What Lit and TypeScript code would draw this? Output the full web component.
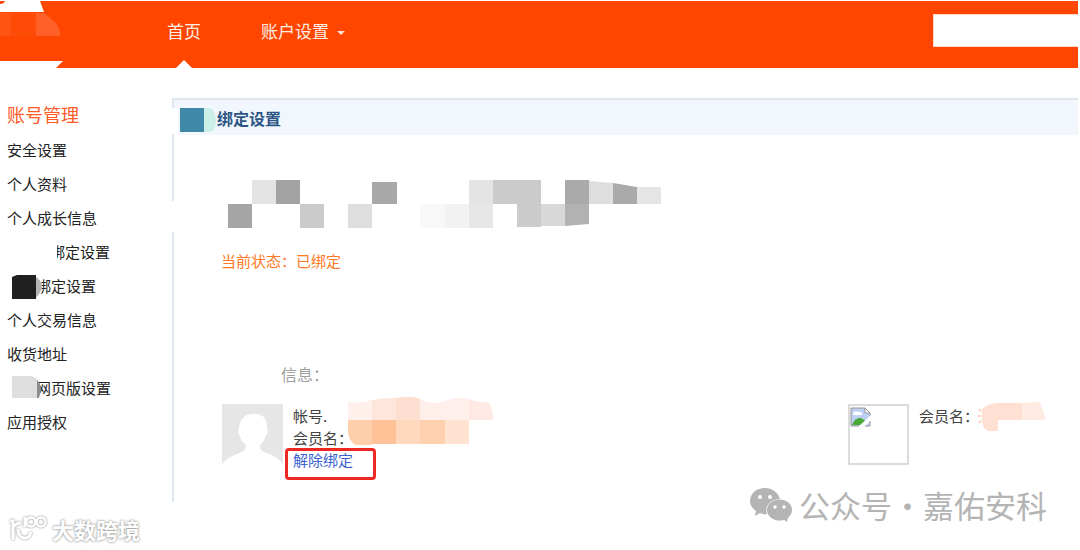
import { LitElement, html, svg, css } from "lit";
import { customElement, property } from "lit/decorators.js";

type Tile = [x: number, y: number, w: number, h: number, fill: string];

const tiles = (list: Tile[]) =>
  list.map(([x, y, w, h, fill]) => svg`<rect x=${x} y=${y} width=${w} height=${h} fill=${fill} />`);

@customElement("site-header")
class SiteHeader extends LitElement {
  static styles = css`
    :host { display: block; padding: 1px 2px 0 0; }
    .bar { display: flex; align-items: center; height: 67px; background: #ff4600; color: #fff; }
    .logo { flex: none; width: 64px; height: 67px; }
    .nav { display: flex; align-self: stretch; flex: 1; margin-left: 103px; gap: 60px; }
    .item {
      position: relative; display: flex; align-items: center; height: 58px; gap: 8px;
      padding: 0; border: 0; background: none; color: #ffeee4; font: inherit; font-size: 17px;
      text-decoration: none; white-space: nowrap; cursor: pointer;
    }
    .pointer { position: absolute; left: 9px; top: 59px; width: 16px; height: 8px; }
    .caret { width: 8px; height: 4px; margin-top: 6px; }
    .search { width: 145px; height: 33px; box-sizing: border-box; border: 1px solid #ffd9ca; border-right: 0;
      background: #fff; padding: 0 8px; margin-bottom: 8px; font: inherit; outline: none; border-radius: 0; }
  `;
  render() {
    return html`<header class="bar">
      <svg class="logo" viewBox="0 1 64 67" aria-hidden="true">
        <path d="M0 4Q4 4 5 1H40L44 12H0Z" fill="#fff" />
        <path d="M0 13H11V36H0Z" fill="#ff5413" />
        <path d="M11 13H36V36H11Z" fill="#ff4b08" />
        <path d="M36 13H45C48 18 58 21 60 32V36H36Z" fill="#ff6028" />
        <path d="M0 61H63L56 68H0Z" fill="#fff" />
      </svg>
      <nav class="nav">
        <a class="item" href="#home">首页
          <svg class="pointer" viewBox="0 0 16 8" aria-hidden="true"><path d="M0 8L8 0L16 8Z" fill="#fff" /></svg>
        </a>
        <button class="item" type="button">账户设置
          <svg class="caret" viewBox="0 0 8 4" aria-hidden="true"><path d="M0 0H8L4 4Z" fill="#ffe0d0" /></svg>
        </button>
      </nav>
      <input class="search" type="search" aria-label="搜索" />
    </header>`;
  }
}

@customElement("side-menu")
class SideMenu extends LitElement {
  static styles = css`
    :host { display: block; padding: 2px 0 0 7px; }
    .title { margin: 0; font-size: 18px; line-height: 28px; font-weight: 400; color: #ff5a26; }
    .list { list-style: none; margin: 4px 0 0; padding: 0; }
    .row { position: relative; display: flex; align-items: center; height: 34px; font-size: 15px; }
    .link { color: #222; text-decoration: none; white-space: nowrap; }
    .near { padding-left: 29px; }
    .far { padding-left: 43px; }
    .cover { position: absolute; left: 3px; top: 5px; width: 48px; height: 28px; }
  `;
  private row(label: string, indent = "", cover: unknown = "") {
    return html`<li class="row ${indent}">
      <a class="link" href="#settings">${label}</a>
      ${cover ? html`<svg class="cover" viewBox="0 0 48 28" aria-hidden="true">${cover}</svg>` : ""}
    </li>`;
  }
  render() {
    return html`<h2 class="title">账号管理</h2>
      <ul class="list">
        ${this.row("安全设置")} ${this.row("个人资料")} ${this.row("个人成长信息")}
        ${this.row("绑定设置", "far", svg`<path d="M30 0H47V28H30Z" fill="#fff" />`)}
        ${this.row("绑定设置", "near", svg`<path d="M20 0H31V28H20Z" fill="#fff" />
          <path d="M25 3Q32 7 32 15Q30 21 25 26Z" fill="#b5b5b5" />
          <path d="M2 4L7 2H26V26H2Z" fill="#202020" />`)}
        ${this.row("个人交易信息")} ${this.row("收货地址")}
        ${this.row("网页版设置", "near", svg`<path d="M25 3Q31 7 31 15L29 23H25Z" fill="#8c8c8c" />
          <path d="M2 1H22L27 4V23H2Z" fill="#dedede" />`)}
        ${this.row("应用授权")}
      </ul>`;
  }
}

@customElement("binding-panel")
class BindingPanel extends LitElement {
  @property() state = "已绑定";
  static styles = css`
    :host { display: block; position: relative; border-left: 2px solid #dfe8f0; padding-bottom: 31px; }
    .gap { position: absolute; left: -2px; width: 2px; background: #fff; }
    .gap-head { top: 10px; height: 26px; width: 6px; }
    .gap-body { top: 103px; height: 31px; }
    .head { display: flex; align-items: center; gap: 1px; height: 35px; border-top: 2px solid #dfe6ee;
      background: #f2f7fe; padding-left: 6px; }
    .swatch { width: 36px; height: 24px; margin-top: 5px; }
    .title { margin: 0; font-size: 16px; line-height: 24px; font-weight: 700; color: #2c5584; }
    .mosaic { display: block; width: 434px; height: 48px; margin: 45px 0 0 54px; }
    .status { margin: 22px 0 0 47px; font-size: 15px; line-height: 22px; color: #ff7a26; }
    .caption { margin: 91px 0 0 107px; font-size: 16px; line-height: 22px; color: #a0a0a0; }
    .people { display: flex; justify-content: space-between; margin: 19px 0 0 48px; }
    .person { position: relative; display: flex; gap: 10px; }
    .second { width: 230px; }
    .avatar { flex: none; width: 61px; height: 61px; }
    .info { font-size: 15px; line-height: 22px; color: #444; padding-top: 1px; white-space: nowrap; }
    .line { margin: 0; }
    .unbind { color: #3a62d0; text-decoration: none; }
    .mark { position: absolute; left: 63px; top: 44px; width: 85px; height: 26px; border: 3px solid #ee2722; border-radius: 4px; }
    .cover { position: absolute; left: 126px; top: -9px; width: 146px; height: 54px; }
    .cover-small { position: absolute; left: 128px; top: -3px; width: 72px; height: 32px; }
  `;
  render() {
    return html`
      <header class="head">
        <svg class="swatch" viewBox="0 0 36 24" aria-hidden="true">
          <path d="M24 0H31Q36 5 36 12Q36 24 28 24H24Z" fill="#cdf0e6" /><rect width="24" height="24" fill="#4088a8" />
        </svg>
        <h1 class="title">绑定设置</h1>
      </header>
      <span class="gap gap-head"></span><span class="gap gap-body"></span>
      <svg class="mosaic" viewBox="228 180 434 48" aria-hidden="true">
        ${tiles([
          [252, 180, 24, 24, "#e3e3e3"], [276, 180, 24, 24, "#a3a3a3"],
          [228, 204, 24, 24, "#a5a5a5"], [300, 204, 24, 24, "#cbcbcb"],
          [348, 204, 24, 24, "#dedede"], [372, 182, 25, 22, "#a8a8a8"],
          [420, 204, 25, 24, "#f8f8f8"], [445, 204, 24, 24, "#f2f2f2"],
          [469, 180, 24, 24, "#e4e4e4"], [469, 204, 24, 24, "#e7e7e7"],
          [493, 180, 48, 24, "#cbcbcb"], [517, 204, 24, 23, "#cbcbcb"],
          [541, 204, 24, 22, "#d8d8d8"], [565, 180, 24, 24, "#aaaaaa"],
        ])}
        <path d="M565 204H589V224L565 226Z" fill="#b2b2b2" />
        <path d="M589 181L613 183V204H589Z" fill="#dedede" />
        <path d="M613 183L637 187V204H613Z" fill="#aaa" />
        <path d="M637 187H661V204H637Z" fill="#e5e5e5" />
      </svg>
      <p class="status">当前状态：${this.state}</p>
      <p class="caption">信息：</p>
      <div class="people">
        <section class="person">
          <svg class="avatar" viewBox="0 0 61 61" role="img" aria-label="头像">
            <rect width="61" height="61" fill="#e6e6e6" />
            <path d="M0 61C3 54 13 51 20 48Q24 46 24 41C20 38 18 34 17 30Q15 28 17 24C18 14 24 10 31 10Q37 9 42 13L43 15C45 17 45 21 45 24Q47 28 44 31C43 35 41 38 38 41Q37 46 42 48C50 51 58 54 61 61Z" fill="#fff" />
          </svg>
          <div class="info">
            <p class="line">帐号.</p>
            <p class="line">会员名：</p>
            <a class="unbind" href="#unbind">解除绑定</a>
          </div>
          <span class="mark"></span>
          <svg class="cover" viewBox="348 395 146 54" aria-hidden="true">
            <path d="M348 402Q360 404 372 400V420H348Z" fill="#fff0eb" />
            <path d="M372 400Q384 398 396 398V420H372Z" fill="#ffe6dc" />
            <path d="M396 398Q412 395 420 399V420H396Z" fill="#fddfd2" />
            <path d="M420 399Q432 406 445 401V420H420Z" fill="#ffefeb" />
            <path d="M445 401Q457 395 469 399V420H445Z" fill="#ffefec" />
            <path d="M469 399Q478 403 488 402Q493 405 493 420H469Z" fill="#ffe9e4" />
            <path d="M348 420H372V445H355Q348 440 348 430Z" fill="#ffcfac" />
            ${tiles([
              [372, 420, 24, 24, "#ffc198"], [396, 420, 24, 24, "#ffd8bd"],
              [420, 420, 25, 24, "#ffd0ae"], [445, 420, 24, 24, "#ffe3d0"],
            ])}
          </svg>
        </section>
        <section class="person second">
          <svg class="avatar" viewBox="0 0 61 61" role="img" aria-label="头像">
            <rect x="1" y="1" width="59" height="59" fill="#fff" stroke="#cfcfcf" stroke-width="1.500" />
            <path d="M3 4H17L22 9V22H3Z" fill="#bdd0f2" />
            <path d="M5 10Q6 6 10 8Q14 7 14 11H5Z" fill="#fff" />
            <path d="M4 21Q7 13 13 14L18 17L14 21Z" fill="#49a936" />
            <path d="M23 11L10 23H16L23 17Z" fill="#fff" />
            <path d="M3 22V4H17L22 9V12M3 22H11M22 17V22H17" fill="none" stroke="#959595" />
            <path d="M17 4V9H22Z" fill="#fff" stroke="#959595" />
          </svg>
          <div class="info"><p class="line">会员名：</p></div>
          <svg class="cover-small" viewBox="976 401 72 32" aria-hidden="true">
            <path d="M982 409Q988 403 998 403H1022V420H998V431H988Q982 429 982 418Z" fill="#ffe0d2" />
            <path d="M1022 403L1040 402L1046 420H1022Z" fill="#ffebe3" />
            <path d="M979 409L981 411M978 416H981M979 423L981 421" stroke="#ffc5a8" stroke-width="1.5" />
          </svg>
        </section>
      </div>`;
  }
}

@customElement("app-root")
class AppRoot extends LitElement {
  static styles = css`
    :host { display: block; position: relative; min-height: 100vh; background: #fff;
      font-family: "Noto Sans CJK SC", sans-serif; }
    .page { display: grid; grid-template-columns: 172px 1fr; align-items: start; padding: 30px 2px 0 0; }
    .account { position: absolute; right: 33px; bottom: 22px; display: flex; align-items: center; gap: 7px;
      font-size: 31px; line-height: 46px; color: #b4b4b4; white-space: nowrap; }
    .chat { width: 42px; height: 35px; }
    .brand { position: absolute; left: 8px; bottom: 5px; display: flex; align-items: center; gap: 4px;
      font-size: 22px; line-height: 32px; font-weight: 700; color: #fff;
      text-shadow: 0 0 2px #999, 0 0 3px #aaa; white-space: nowrap; }
    .glyph { width: 40px; height: 28px; filter: drop-shadow(0 0 1px #888); overflow: visible; }
  `;
  render() {
    return html`
      <site-header></site-header>
      <div class="page">
        <side-menu></side-menu>
        <binding-panel></binding-panel>
      </div>
      <div class="account">
        <svg class="chat" viewBox="0 0 42 35" aria-hidden="true">
          <path d="M15 0C6 0 0 6 0 13C0 17 2 20 6 23L5 28L10 25Q14 27 17 26C14 18 21 11 30 11C28 4 22 0 15 0Z" fill="#b4b4b4" />
          <ellipse cx="29.500" cy="22" rx="12.500" ry="10.500" fill="#b4b4b4" />
          <path d="M33 31L37 34L38 28Z" fill="#b4b4b4" />
          <g fill="#fff"><circle cx="10" cy="9" r="2" /><circle cx="20" cy="9" r="2" />
            <circle cx="25" cy="19" r="1.700" /><circle cx="34" cy="19" r="1.700" /></g>
        </svg>
        <span>公众号·嘉佑安科</span>
      </div>
      <div class="brand">
        <svg class="glyph" viewBox="0 0 40 28" fill="none" stroke="#fff" stroke-width="3" aria-hidden="true">
          <path d="M2 6H5V25M5 12Q8 8 13 8" />
          <path d="M10 14C10 25 21 26 23 17" />
          <path d="M17 2V12" />
          <circle cx="23" cy="7" r="4.500" stroke-width="2.500" /><circle cx="33" cy="7" r="4.500" stroke-width="2.500" />
        </svg>
        <span>大数跨境</span>
      </div>`;
  }
}
